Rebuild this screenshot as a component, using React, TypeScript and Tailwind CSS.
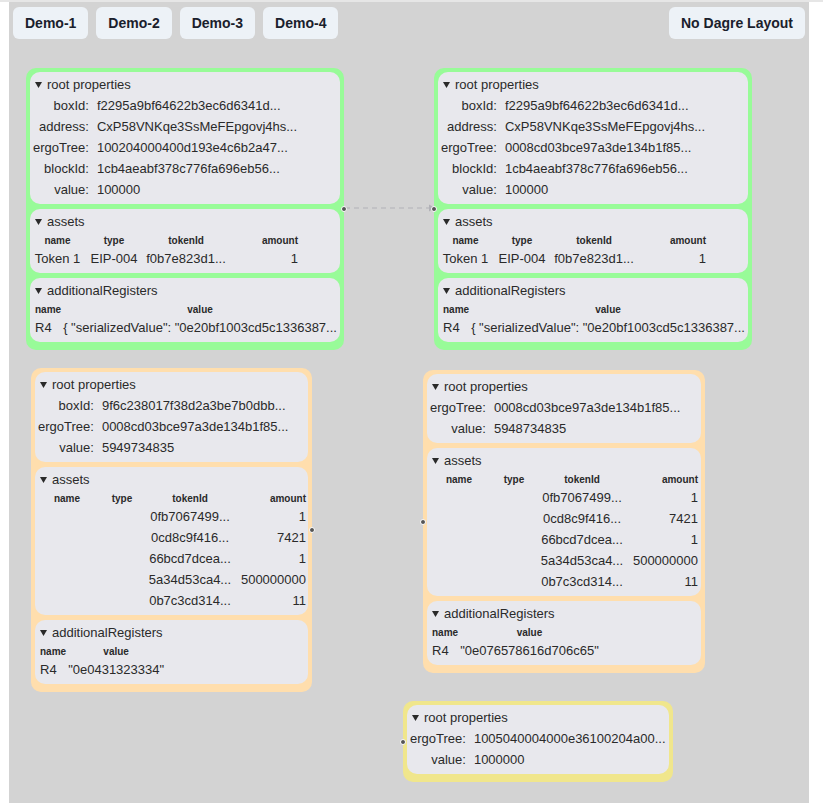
import type { ReactNode } from 'react';

type Prop = [string, string];
type Asset = { name: string; type: string; tokenId: string; amount: string };

const font = { fontFamily: '"Liberation Sans", Arial, sans-serif' };

const tokens: Asset[] = [
  { name: '', type: '', tokenId: '0fb7067499...', amount: '1' },
  { name: '', type: '', tokenId: '0cd8c9f416...', amount: '7421' },
  { name: '', type: '', tokenId: '66bcd7dcea...', amount: '1' },
  { name: '', type: '', tokenId: '5a34d53ca4...', amount: '500000000' },
  { name: '', type: '', tokenId: '0b7c3cd314...', amount: '11' },
];

function Triangle() {
  return (
    <svg width="7" height="6" viewBox="0 0 7 6" className="shrink-0">
      <path d="M0 0h7L3.5 6z" fill="currentColor" />
    </svg>
  );
}

function Section({ title, children }: { title: string; children: ReactNode }) {
  return (
    <div className="rounded-[10px] bg-[#e8e8ed] px-[3px] pt-[3px] pb-1">
      <div className="flex h-5 items-center pl-[2px]">
        <Triangle />
        <span className="ml-[5px]">{title}</span>
      </div>
      {children}
    </div>
  );
}

function RootProps({ rows }: { rows: Prop[] }) {
  return (
    <Section title="root properties">
      <div className="grid grid-cols-[auto_1fr] gap-x-2">
        {rows.map(([k, v]) => (
          <div key={k} className="contents">
            <div className="flex h-[21px] items-center justify-end whitespace-nowrap">{k}:</div>
            <div className="flex h-[21px] items-center whitespace-nowrap">{v}</div>
          </div>
        ))}
      </div>
    </Section>
  );
}

function Assets({ items, cols }: { items: Asset[]; cols: string }) {
  return (
    <Section title="assets">
      <div className={`grid ${cols}`}>
        <div className="flex h-4 items-center justify-center text-[10px] font-bold">name</div>
        <div className="flex h-4 items-center justify-center text-[10px] font-bold">type</div>
        <div className="flex h-4 items-center justify-center text-[10px] font-bold">tokenId</div>
        <div className="flex h-4 items-center justify-end text-[10px] font-bold">amount</div>
        {items.map((a) => (
          <div key={a.tokenId} className="contents">
            <div className="flex h-[21px] items-center justify-center whitespace-nowrap">{a.name}</div>
            <div className="flex h-[21px] items-center justify-center whitespace-nowrap">{a.type}</div>
            <div className="flex h-[21px] items-center justify-center whitespace-nowrap">{a.tokenId}</div>
            <div className="flex h-[21px] items-center justify-end whitespace-nowrap">{a.amount}</div>
          </div>
        ))}
      </div>
    </Section>
  );
}

function Registers({ value }: { value: string }) {
  return (
    <Section title="additionalRegisters">
      <table>
        <thead>
          <tr className="h-4 text-[10px] font-bold">
            <th className="p-0 pl-[2px] text-left">name</th>
            <th className="p-0 pl-[2px] text-center">value</th>
          </tr>
        </thead>
        <tbody>
          <tr className="h-[21px]">
            <td className="p-0 pl-[2px]">R4</td>
            <td className="whitespace-nowrap p-0 pl-[2px]">{value}</td>
          </tr>
        </tbody>
      </table>
    </Section>
  );
}

function Handle({ side }: { side: 'left' | 'right' }) {
  return (
    <div
      className={`absolute top-1/2 h-[6px] w-[6px] -translate-y-1/2 rounded-full border border-white bg-[#555] ${
        side === 'left' ? '-left-[3px]' : '-right-[3px]'
      }`}
    />
  );
}

function Node({
  className,
  children,
  left,
  right,
}: {
  className: string;
  children: ReactNode;
  left?: boolean;
  right?: boolean;
}) {
  return (
    <div className={`absolute flex flex-col gap-[5px] rounded-[10px] px-1 pt-1 pb-2 ${className}`}>
      {children}
      {left && <Handle side="left" />}
      {right && <Handle side="right" />}
    </div>
  );
}

function Btn({ children }: { children: ReactNode }) {
  return (
    <button className="h-8 rounded-md bg-[#edf2f7] px-3 text-sm font-semibold text-[#1a202c]">
      {children}
    </button>
  );
}

export default function App() {
  const greenAsset: Asset[] = [
    { name: 'Token 1', type: 'EIP-004', tokenId: 'f0b7e823d1...', amount: '1' },
  ];
  const serialized = '{ "serializedValue": "0e20bf1003cd5c1336387...';

  return (
    <div className="min-h-[810px] w-[823px] bg-white" style={font}>
      <div className="h-[2px] bg-[#e6e6e6]" />
      <div className="relative ml-[9px] h-[801px] w-[800px] bg-[#d3d3d3] text-[13px] text-[#2a2a2a]">
        <div className="flex items-start justify-between px-1 pt-[5px]">
          <div className="flex gap-2">
            <Btn>Demo-1</Btn>
            <Btn>Demo-2</Btn>
            <Btn>Demo-3</Btn>
            <Btn>Demo-4</Btn>
          </div>
          <Btn>No Dagre Layout</Btn>
        </div>

        <svg className="pointer-events-none absolute inset-0" width="800" height="801">
          <line x1="336" y1="206" x2="421" y2="206" stroke="#b1b1b7" strokeWidth="1" strokeDasharray="5 4" />
          <path d="M420 202.5L426 206L420 209.5z" fill="#b1b1b7" />
        </svg>

        <Node className="left-[17px] top-[66px] w-[318px] bg-[#98fb98]" right>
          <RootProps
            rows={[
              ['boxId', 'f2295a9bf64622b3ec6d6341d...'],
              ['address', 'CxP58VNKqe3SsMeFEpgovj4hs...'],
              ['ergoTree', '100204000400d193e4c6b2a47...'],
              ['blockId', '1cb4aeabf378c776fa696eb56...'],
              ['value', '100000'],
            ]}
          />
          <Assets items={greenAsset} cols="grid-cols-[49px_64px_80px_72px]" />
          <Registers value={serialized} />
        </Node>

        <Node className="left-[425px] top-[66px] w-[318px] bg-[#98fb98]" left>
          <RootProps
            rows={[
              ['boxId', 'f2295a9bf64622b3ec6d6341d...'],
              ['address', 'CxP58VNKqe3SsMeFEpgovj4hs...'],
              ['ergoTree', '0008cd03bce97a3de134b1f85...'],
              ['blockId', '1cb4aeabf378c776fa696eb56...'],
              ['value', '100000'],
            ]}
          />
          <Assets items={greenAsset} cols="grid-cols-[49px_64px_80px_72px]" />
          <Registers value={serialized} />
        </Node>

        <Node className="left-[22px] top-[366px] w-[281px] bg-[#ffdead]" right>
          <RootProps
            rows={[
              ['boxId', '9f6c238017f38d2a3be7b0dbb...'],
              ['ergoTree', '0008cd03bce97a3de134b1f85...'],
              ['value', '5949734835'],
            ]}
          />
          <Assets items={tokens} cols="grid-cols-[58px_52px_84px_74px]" />
          <Registers value={'"0e0431323334"'} />
        </Node>

        <Node className="left-[414px] top-[368px] w-[282px] bg-[#ffdead]" left>
          <RootProps
            rows={[
              ['ergoTree', '0008cd03bce97a3de134b1f85...'],
              ['value', '5948734835'],
            ]}
          />
          <Assets items={tokens} cols="grid-cols-[58px_52px_84px_74px]" />
          <Registers value={'"0e076578616d706c65"'} />
        </Node>

        <Node className="left-[394px] top-[699px] w-[270px] bg-[#f0e68c]" left>
          <RootProps
            rows={[
              ['ergoTree', '1005040004000e36100204a00...'],
              ['value', '1000000'],
            ]}
          />
        </Node>
      </div>
    </div>
  );
}
